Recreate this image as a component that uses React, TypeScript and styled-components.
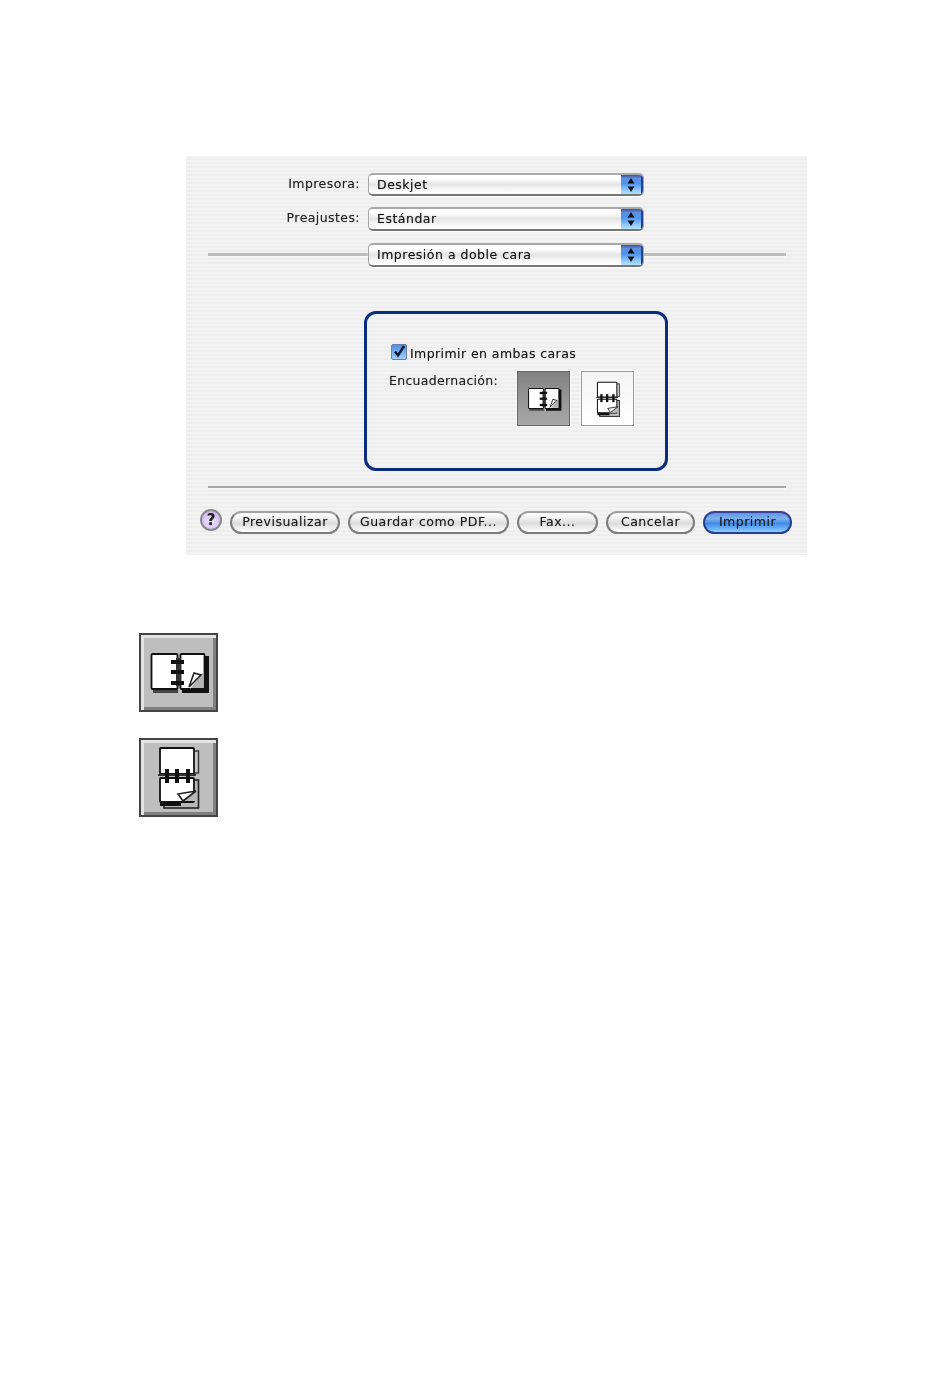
import React, { FC } from "react";
import styled, { createGlobalStyle } from "styled-components";

const GlobalStyle = createGlobalStyle`
  html, body {
    margin: 0;
    padding: 0;
    background: #fff;
  }
`;

const Page = styled.div`
  width: 950px;
  height: 1376px;
  padding-top: 156px;
  box-sizing: border-box;
  overflow: hidden;
`;

const Panel = styled.div`
  margin-left: 186px;
  width: 621px;
  height: 399px;
  padding-top: 17px;
  box-sizing: border-box;
  background: repeating-linear-gradient(to bottom, #f3f3f3 0, #f3f3f3 2px, #eeeeee 2px, #eeeeee 4px);
  font-family: "DejaVu Sans", sans-serif;
  font-size: 12.5px;
  color: #111;
  text-shadow: 0 0 1px rgba(0, 0, 0, 0.35);
  filter: blur(0.5px);
`;

const FormRow = styled.div<{ $gap: number }>`
  display: flex;
  align-items: center;
  margin-bottom: ${(p) => p.$gap}px;
`;

const RowLabel = styled.div<{ $lift: number }>`
  width: 174px;
  margin-right: 8px;
  padding-bottom: ${(p) => p.$lift}px;
  text-align: right;
  letter-spacing: 0.42px;
  color: #222;
  white-space: nowrap;
`;

const Line = styled.div<{ $w: number; $ml?: number }>`
  width: ${(p) => p.$w}px;
  margin-left: ${(p) => p.$ml || 0}px;
  margin-bottom: 2px;
  height: 3px;
  background: #bcbcbc;
  box-shadow: 0 1px 0 #fafafa;
`;

const SelectBox = styled.div<{ $h: number }>`
  width: 276px;
  height: ${(p) => p.$h}px;
  box-sizing: border-box;
  display: flex;
  align-items: center;
  border: 1px solid #a8a8a8;
  border-top: 2px solid #a9a9a9;
  border-bottom: 2px solid #777;
  border-radius: 5px;
  background: linear-gradient(to bottom, #fff 0%, #fff 20%, #e4e4e4 50%, #f4f4f4 70%, #fff 100%);
  box-shadow: 0 1px 1px #fff;
  overflow: hidden;
`;

const SelectText = styled.span<{ $lift?: number }>`
  flex: 1;
  padding-left: 8px;
  padding-bottom: ${(p) => p.$lift || 0}px;
  letter-spacing: 0.5px;
`;

const Stepper = styled.div`
  width: 22px;
  height: 100%;
  flex: none;
  display: flex;
  align-items: center;
  justify-content: center;
  background: linear-gradient(to bottom, #3f4fa0 0, #5f8fe0 18%, #4d95ee 45%, #8ec6fb 78%, #b4e4f4 100%);
  border-right: 2px solid #27408f;
  box-sizing: border-box;
`;

const GroupBox = styled.div`
  margin: 44px 0 15px 178px;
  width: 304px;
  height: 160px;
  box-sizing: border-box;
  border: 3px solid #0c2d7c;
  border-radius: 12px;
  padding: 30px 0 0 22px;
`;

const CheckRow = styled.div`
  display: flex;
  align-items: flex-start;
  gap: 3px;
  margin-left: 2px;
  height: 16px;
  letter-spacing: 0.42px;
`;

const CheckLabel = styled.span`
  padding-top: 2px;
  white-space: nowrap;
`;

const Check = styled.div`
  width: 16px;
  height: 16px;
  box-sizing: border-box;
  border: 1px solid #6d7fa8;
  border-radius: 2px;
  background: linear-gradient(to bottom, #4d8fe6, #9cd0fa);
  display: flex;
  align-items: center;
  justify-content: center;
`;

const BindingRow = styled.div`
  display: flex;
  margin-top: 11px;
`;

const BindingLabel = styled.div`
  width: 128px;
  padding-top: 2px;
  letter-spacing: 0.3px;
  color: #222;
  white-space: nowrap;
`;

const BindingButton = styled.div<{ $active?: boolean }>`
  width: 53px;
  height: 55px;
  margin-right: 11px;
  box-sizing: border-box;
  border: 1px solid ${(p) => (p.$active ? "#666" : "#9a9a9a")};
  background: ${(p) =>
    p.$active ? "linear-gradient(to bottom, #828282, #a8a8a8)" : "linear-gradient(to bottom, #f4f4f4, #fff)"};
  box-shadow: 0 0 0 1px #fafafa;
  display: flex;
  align-items: center;
  justify-content: center;
`;

const Divider = styled.div`
  margin-left: 22px;
  width: 578px;
  height: 2px;
  background: #a8a8a8;
  box-shadow: 0 1px 0 #fafafa;
`;

const Footer = styled.div`
  display: flex;
  align-items: flex-start;
  gap: 8px;
  margin: 21px 0 0 14px;
`;

const Help = styled.div`
  width: 22px;
  height: 22px;
  box-sizing: border-box;
  border: 2px solid #8a8a8a;
  border-radius: 50%;
  background: radial-gradient(circle at 50% 60%, #f0e6ff, #c3a9ea);
  text-align: center;
  font-size: 15px;
  line-height: 18px;
  font-weight: bold;
  color: #222;
`;

const Pill = styled.div<{ $w: number; $primary?: boolean }>`
  width: ${(p) => p.$w}px;
  height: 23px;
  margin-top: 2px;
  padding-bottom: 2px;
  box-sizing: border-box;
  border-radius: 12px;
  border: 2px solid ${(p) => (p.$primary ? "#24408f" : "#7c7c7c")};
  border-top-color: ${(p) => (p.$primary ? "#3a3f98" : "#a0a0a0")};
  background: ${(p) =>
    p.$primary
      ? "linear-gradient(to bottom, #5d94e6 0%, #7fb2ef 30%, #3f8aea 55%, #8ccdfa 100%)"
      : "linear-gradient(to bottom, #fff 0%, #efefef 30%, #dcdcdc 55%, #fff 100%)"};
  display: flex;
  align-items: center;
  justify-content: center;
  letter-spacing: 0.5px;
  color: #1a1a1a;
  white-space: nowrap;
`;

const IconList = styled.div`
  margin: 78px 0 0 139px;
  display: flex;
  flex-direction: column;
  gap: 26px;
`;

const BigButton = styled.div`
  width: 79px;
  height: 79px;
  padding: 1px;
  box-sizing: border-box;
  background: #bebebe;
  box-shadow: inset 0 0 0 2px #454545, inset 5px 5px 0 #e4e4e4, inset -5px -5px 0 #808080;
`;

const Arrows: FC = () => (
  <svg width="10" height="16" viewBox="0 0 10 16">
    <path d="M5 1 L8.5 6.5 L1.5 6.5 Z M5 15 L8.5 9.5 L1.5 9.5 Z" fill="#111" />
  </svg>
);

const CheckMark: FC = () => (
  <svg width="14" height="14" viewBox="0 0 14 14">
    <path d="M3 6.5 L6 10.5 L12 1" fill="none" stroke="#10172e" strokeWidth="2.4" />
  </svg>
);

const SideBook: FC<{ size: number }> = ({ size }) => (
  <svg width={size} height={size} viewBox="0 0 77 77">
    <path d="M64 22 H69 V59 H42 V55 H64 Z" fill="#111" />
    <path d="M13 55 H38 V59 H13 Z" fill="#444" />
    <rect x="11.5" y="20" width="26" height="35" rx="1" fill="#fff" stroke="#111" strokeWidth="1.8" />
    <rect x="40.5" y="20" width="24" height="35" rx="1" fill="#fff" stroke="#111" strokeWidth="1.8" />
    <path d="M50 55 L63.5 38 V54 H50 Z" fill="#b4b4b4" />
    <path d="M49 53 L54 39 L61 41 Z" fill="#fff" stroke="#222" strokeWidth="1.6" />
    <rect x="36" y="24" width="5" height="28" fill="#333" />
    <rect x="31" y="26" width="13" height="4" fill="#111" />
    <rect x="31" y="36" width="13" height="4" fill="#111" />
    <rect x="31" y="47" width="13" height="4" fill="#111" />
  </svg>
);

const TopBook: FC<{ size: number }> = ({ size }) => (
  <svg width={size} height={size} viewBox="0 0 77 77">
    <rect x="24" y="12" width="34.5" height="22" fill="#c8c8c8" stroke="#333" strokeWidth="1.4" />
    <rect x="24" y="41" width="34.5" height="28" fill="#b8b8b8" stroke="#222" strokeWidth="1.6" />
    <rect x="20" y="9" width="34" height="26" rx="1" fill="#fff" stroke="#111" strokeWidth="1.8" />
    <rect x="20" y="39" width="34" height="24" rx="1" fill="#fff" stroke="#111" strokeWidth="1.8" />
    <rect x="20" y="62" width="21" height="5" fill="#111" />
    <path d="M43 62 L56 52 V62 Z" fill="#b8b8b8" />
    <path d="M38 55 L56 52 L43 62 Z" fill="#fff" stroke="#222" strokeWidth="1.6" />
    <rect x="18" y="35" width="38" height="2" fill="#333" />
    <rect x="25" y="30" width="4" height="14" fill="#111" />
    <rect x="35" y="30" width="4" height="14" fill="#111" />
    <rect x="46" y="30" width="4" height="14" fill="#111" />
  </svg>
);

const App: FC = () => (
  <Page>
    <GlobalStyle />
    <Panel>
      <FormRow $gap={11}>
        <RowLabel $lift={2}>Impresora:</RowLabel>
        <SelectBox $h={23}>
          <SelectText>Deskjet</SelectText>
          <Stepper>
            <Arrows />
          </Stepper>
        </SelectBox>
      </FormRow>
      <FormRow $gap={12}>
        <RowLabel $lift={4}>Preajustes:</RowLabel>
        <SelectBox $h={24}>
          <SelectText $lift={2}>Estándar</SelectText>
          <Stepper>
            <Arrows />
          </Stepper>
        </SelectBox>
      </FormRow>
      <FormRow $gap={0}>
        <Line $w={160} $ml={22} />
        <SelectBox $h={24}>
          <SelectText $lift={2}>Impresión a doble cara</SelectText>
          <Stepper>
            <Arrows />
          </Stepper>
        </SelectBox>
        <Line $w={142} />
      </FormRow>
      <GroupBox>
        <CheckRow>
          <Check>
            <CheckMark />
          </Check>
          <CheckLabel>Imprimir en ambas caras</CheckLabel>
        </CheckRow>
        <BindingRow>
          <BindingLabel>Encuadernación:</BindingLabel>
          <BindingButton $active>
            <SideBook size={44} />
          </BindingButton>
          <BindingButton>
            <TopBook size={44} />
          </BindingButton>
        </BindingRow>
      </GroupBox>
      <Divider />
      <Footer>
        <Help>?</Help>
        <Pill $w={110}>Previsualizar</Pill>
        <Pill $w={161}>Guardar como PDF...</Pill>
        <Pill $w={81}>Fax...</Pill>
        <Pill $w={89}>Cancelar</Pill>
        <Pill $w={89} $primary>
          Imprimir
        </Pill>
      </Footer>
    </Panel>
    <IconList>
      <BigButton>
        <SideBook size={77} />
      </BigButton>
      <BigButton>
        <TopBook size={77} />
      </BigButton>
    </IconList>
  </Page>
);

export default App;
